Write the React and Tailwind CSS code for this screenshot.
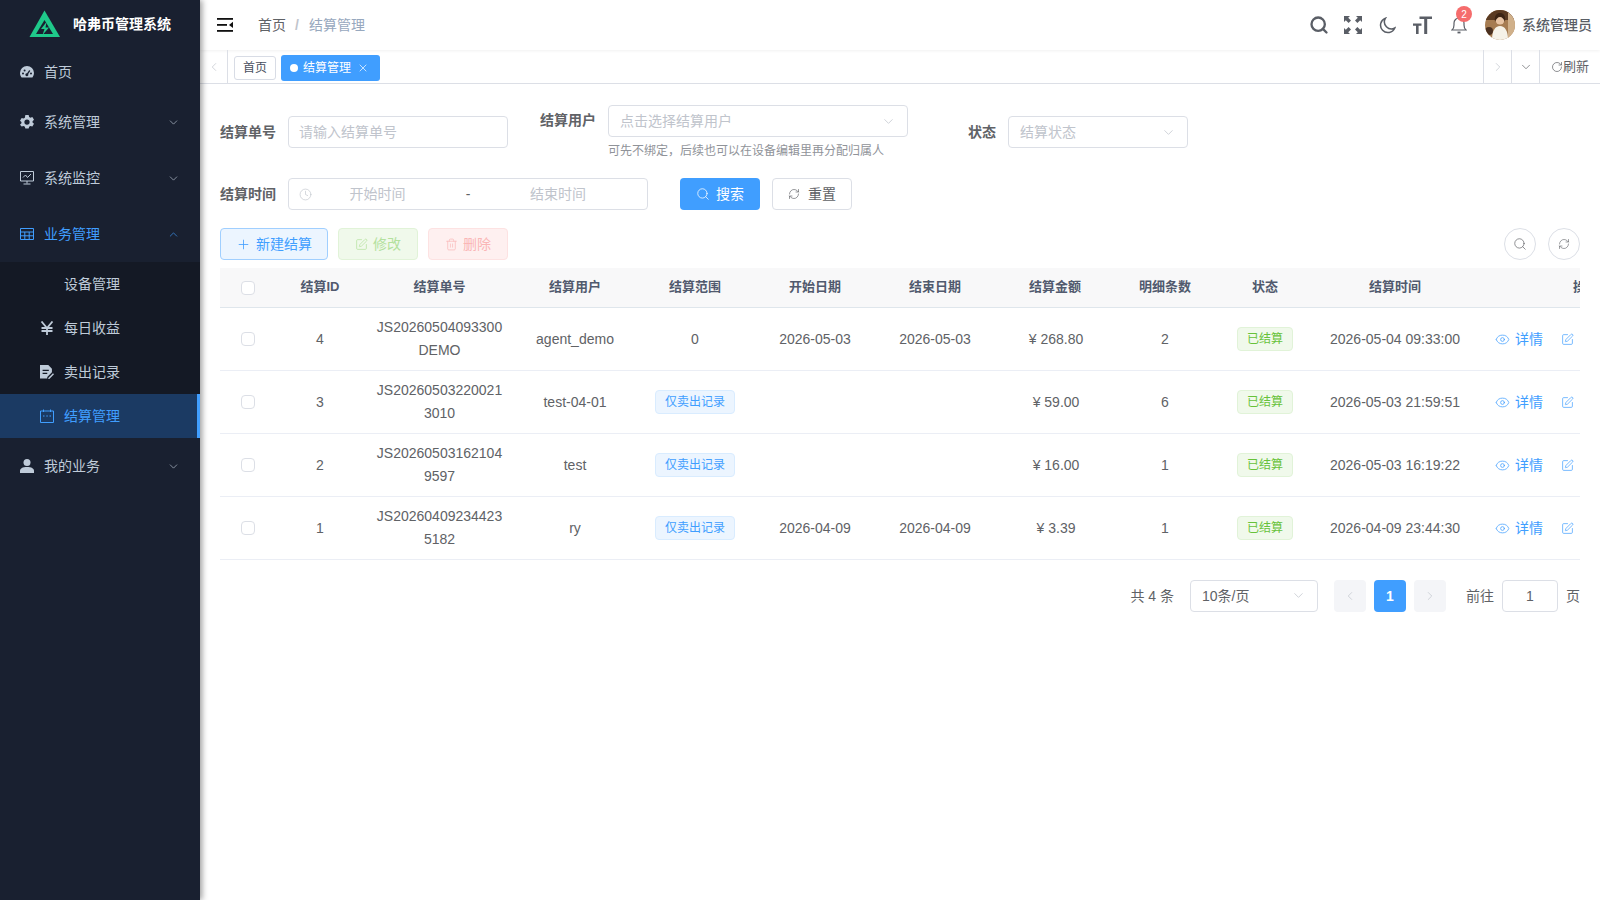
import React from 'react';
import { ChevronDown, ChevronUp, ChevronLeft, ChevronRight, Search, RefreshCw, RotateCw, Plus, X, Clock, Eye, SquarePen, Trash2 } from 'lucide-react';

/** Settlement management page of the admin console. */

const rows = [
  { id: 4, no: 'JS20260504093300DEMO', user: 'agent_demo', range: '0', start: '2026-05-03', end: '2026-05-03', amount: '¥ 268.80', count: 2, time: '2026-05-04 09:33:00' },
  { id: 3, no: 'JS202605032200213010', user: 'test-04-01', range: null, start: '', end: '', amount: '¥ 59.00', count: 6, time: '2026-05-03 21:59:51' },
  { id: 2, no: 'JS202605031621049597', user: 'test', range: null, start: '', end: '', amount: '¥ 16.00', count: 1, time: '2026-05-03 16:19:22' },
  { id: 1, no: 'JS202604092344235182', user: 'ry', range: null, start: '2026-04-09', end: '2026-04-09', amount: '¥ 3.39', count: 1, time: '2026-04-09 23:44:30' },
];

const columns = [
  { title: '结算ID', width: 'w-[88px]' },
  { title: '结算单号', width: 'w-[151px]' },
  { title: '结算用户', width: 'w-[120px]' },
  { title: '结算范围', width: 'w-[120px]' },
  { title: '开始日期', width: 'w-[120px]' },
  { title: '结束日期', width: 'w-[120px]' },
  { title: '结算金额', width: 'w-[120px]' },
  { title: '明细条数', width: 'w-[100px]' },
  { title: '状态', width: 'w-[100px]' },
  { title: '结算时间', width: 'w-[160px]' },
  { title: '操作', width: 'w-[222px]' },
];

function Logo() {
  return (
    <svg width="32" height="28" viewBox="0 0 32 28" className="shrink-0">
      <path d="M15.5 0.5 L31 27 L0.5 27 Z" fill="#1fc98a" />
      <path d="M15.5 10 L24 24 L7 24 Z" fill="#192030" />
      <path d="M17.5 12 L12 19 L15.5 19 L13.5 25 L20 17.5 L16.5 17.5 Z" fill="#1fc98a" />
    </svg>
  );
}

function DashIcon({ className }) {
  return (
    <svg viewBox="1 2 14 12" className={className} fill="currentColor">
      <path fillRule="evenodd" d="M8 2a7 7 0 0 0-7 7c0 1.600.5 3 1.400 4.200.2.2.4.3.6.3h10c.2 0 .4-.1.6-.3A7 7 0 0 0 15 9a7 7 0 0 0-7-7zM4 8.500a1 1 0 1 1 0 2 1 1 0 0 1 0-2zm1.600-3a1 1 0 1 1 0 2 1 1 0 0 1 0-2zm5.800 1.200L9.200 10a1.500 1.500 0 1 1-1.100-.8l2.200-3.200.7.7zM12 8.500a1 1 0 1 1 0 2 1 1 0 0 1 0-2z" />
    </svg>
  );
}

function GearIcon({ className }) {
  return (
    <svg viewBox="0.8 1 14.4 14.4" className={className} fill="currentColor">
      <path fillRule="evenodd" d="M6.300 1h3.400l.5 2 1.300.7 2-.6 1.700 2.900-1.500 1.400v1.200l1.500 1.400-1.700 2.900-2-.6-1.300.7-.5 2H6.300l-.5-2-1.300-.7-2 .6L.8 10.900l1.500-1.400V8.300L.8 6.900 2.500 4l2 .6 1.300-.7zM8 5.500a2.700 2.700 0 1 0 0 5.400 2.700 2.700 0 0 0 0-5.400z" />
    </svg>
  );
}

function MonitorIcon({ className }) {
  return (
    <svg viewBox="1 1.500 14 14" className={className} fill="none" stroke="currentColor" strokeWidth="1">
      <path d="M1.500 2h13v9.500h-13z" />
      <path d="M8 11.500V14M4.500 14.500h7M4 8l2.500-2.500L8.500 8 12 4.500" />
    </svg>
  );
}

function GridIcon({ className }) {
  return (
    <svg viewBox="1 1 14 14" className={className} fill="none" stroke="currentColor" strokeWidth="1">
      <path d="M1.500 2.500h13v11h-13zM1.500 6h13M1.500 9.800h13M5.800 6v7.500M10.200 6v7.500" />
    </svg>
  );
}

function YenIcon({ className }) {
  return (
    <svg viewBox="2 1 12 14" className={className} fill="none" stroke="currentColor" strokeWidth="1.800">
      <path d="M2.500 1.500 8 8l5.500-6.500M2.500 8h11M2.500 11h11M8 8v7" />
    </svg>
  );
}

function DocIcon({ className }) {
  return (
    <svg viewBox="1.500 1.500 13.500 13.500" className={className} fill="currentColor">
      <path fillRule="evenodd" d="M1.500 1.500h8l3.500 3.500v3.500L8.500 13v1.500h-7zM4 6v1.200h6V6zm0 3v1.200h4.500V9z" />
      <path d="M14 9.500 15 10.500 10.500 15H9.500v-1z" />
    </svg>
  );
}

function CalIcon({ className }) {
  return (
    <svg viewBox="1 1 14 14" className={className} fill="none" stroke="currentColor" strokeWidth="1">
      <path d="M1.500 3h13v11.500h-13zM4.500 1.500V4M11.500 1.500V4M4 8h1.500M7.300 8h1.500M10.500 8H12" />
    </svg>
  );
}

function UserIcon({ className }) {
  return (
    <svg viewBox="1 1 14 14" className={className} fill="currentColor">
      <circle cx="8" cy="4.500" r="3.500" />
      <path d="M1 15v-2c0-2.500 2.500-4 7-4s7 1.500 7 4v2z" />
    </svg>
  );
}

function MenuRow({ icon: Icon, label, open, active }) {
  const Arrow = open ? ChevronUp : ChevronDown;
  return (
    <div className={`flex h-14 items-center pl-5 pr-5 text-sm ${active ? 'text-[#409eff]' : 'text-[#bfcbd9]'}`}>
      <Icon className="mr-[10px] h-[14px] w-[14px]" />
      <span>{label}</span>
      <Arrow className="ml-auto h-[13px] w-[13px]" strokeWidth={1.2} />
    </div>
  );
}

function SubRow({ icon: Icon, label, active }) {
  return (
    <div className={`flex h-11 items-center pl-10 text-sm ${active ? 'border-r-[3px] border-[#409eff] bg-[#1b3a63] text-[#409eff]' : 'text-[#bfcbd9]'}`}>
      <span className="mr-[10px] h-[14px] w-[14px]">{Icon && <Icon className="h-[14px] w-[14px]" />}</span>
      <span>{label}</span>
    </div>
  );
}

function Sidebar() {
  return (
    <aside className="relative z-10 flex min-h-[900px] w-[200px] shrink-0 flex-col bg-[#192030] shadow-[2px_0_6px_rgba(0,0,0,0.4)]">
      <div className="flex h-[50px] items-center pb-[2px] pl-[29px]">
        <Logo />
        <span className="ml-3 text-sm font-bold text-white">哈弗币管理系统</span>
      </div>
      <div className="flex h-11 items-center pl-5 text-sm text-[#bfcbd9]">
        <DashIcon className="mr-[10px] h-[12px] w-[14px]" />
        <span>首页</span>
      </div>
      <MenuRow icon={GearIcon} label="系统管理" />
      <MenuRow icon={MonitorIcon} label="系统监控" />
      <MenuRow icon={GridIcon} label="业务管理" open active />
      <div className="bg-[#141925]">
        <SubRow label="设备管理" />
        <SubRow icon={YenIcon} label="每日收益" />
        <SubRow icon={DocIcon} label="卖出记录" />
        <SubRow icon={CalIcon} label="结算管理" active />
      </div>
      <MenuRow icon={UserIcon} label="我的业务" />
    </aside>
  );
}

function Avatar() {
  return (
    <svg width="30" height="30" viewBox="0 0 30 30" className="shrink-0 rounded-full">
      <rect width="30" height="30" fill="#a67c52" />
      <rect x="0" y="0" width="30" height="10" fill="#5a3a22" />
      <rect x="23" y="3" width="7" height="27" fill="#d0b08a" />
      <circle cx="4" cy="21" r="4" fill="#4a3020" />
      <path d="M7 30c0-9 3-14 8-14s8 5 8 14z" fill="#f6f2e8" />
      <circle cx="15" cy="10" r="4.500" fill="#e8c4a4" />
      <path d="M10 12c-1-7 2-9 5-9s6 2 5 9c-1-3-3-5-5-5s-4 2-5 5z" fill="#3c2414" />
    </svg>
  );
}

function Hamburger() {
  return (
    <svg width="16" height="14" viewBox="0 0 16 14" fill="#111">
      <rect x="0" y="0" width="16" height="1.800" />
      <rect x="0" y="6" width="10" height="1.800" />
      <rect x="0" y="12" width="16" height="1.800" />
      <path d="M16 3.800v6.200l-4-3.100z" />
    </svg>
  );
}

function FullscreenIcon() {
  return (
    <svg width="18" height="18" viewBox="0 0 18 18" fill="#5a5e66">
      <path d="M0 0h6L4.200 1.800 7 4.600 4.600 7 1.800 4.200 0 6zM18 0v6l-1.800-1.800L13.400 7 11 4.600l2.800-2.800L12 0zM0 18v-6l1.800 1.800L4.600 11 7 13.400l-2.800 2.800L6 18zM18 18h-6l1.800-1.800L11 13.400l2.400-2.400 2.800 2.800L18 12z" />
    </svg>
  );
}

function MoonIcon() {
  return (
    <svg width="17" height="17" viewBox="0 0 17 17" fill="none" stroke="#5a5e66" strokeWidth="1.500">
      <path d="M6.500 1.200a7.400 7.400 0 1 0 9.300 9.800A7 7 0 0 1 6.500 1.200z" />
    </svg>
  );
}

function FontIcon() {
  return (
    <svg width="19" height="19" viewBox="0 0 19 19" fill="#5a5e66">
      <path d="M6.500 0.500H19v2.600h-4.800V18h-3V3.100H6.500zM0 7.500h8.500v2.200H5.600V18H3V9.700H0z" />
    </svg>
  );
}

function BellIcon() {
  return (
    <svg width="16" height="18" viewBox="0 0 16 18" fill="none" stroke="#5a5e66" strokeWidth="1.200">
      <path d="M1 14c1.500-1.200 2-2.500 2-5V7a5 5 0 0 1 10 0v2c0 2.500.5 3.800 2 5z" />
      <path d="M6.500 16.500h3" strokeWidth="1.800" />
    </svg>
  );
}

function Header() {
  return (
    <header className="flex h-[50px] items-center shadow-[0_1px_3px_rgba(0,0,0,0.06)]">
      <div className="ml-[17px]"><Hamburger /></div>
      <nav className="ml-[25px] flex items-center text-sm">
        <span className="text-[#5f6266]">首页</span>
        <span className="ml-[9px] mr-[10px] font-bold text-[#c0c4cc]">/</span>
        <span className="text-[#97a8be]">结算管理</span>
      </nav>
      <div className="ml-auto flex items-center pr-2">
        <Search className="h-5 w-5 text-[#5a5e66]" strokeWidth={2.800} />
        <div className="ml-[15px]"><FullscreenIcon /></div>
        <div className="ml-[17px]"><MoonIcon /></div>
        <div className="ml-[17px]"><FontIcon /></div>
        <div className="relative ml-[19px]">
          <BellIcon />
          <span className="absolute left-[5px] top-[-10px] flex h-4 w-4 items-center justify-center rounded-full bg-[#f56c6c] text-[10px] text-white">2</span>
        </div>
        <div className="ml-[18px]"><Avatar /></div>
        <span className="ml-[7px] text-sm font-medium text-[#5a5e66]">系统管理员</span>
      </div>
    </header>
  );
}

function TagsBar() {
  return (
    <div className="flex h-[34px] items-center border-b border-[#dcdfe6]">
      <div className="flex h-full w-[28px] items-center justify-center border-r border-[#dcdfe6]">
        <ChevronLeft className="h-[14px] w-[14px] text-[#c0c4cc]" strokeWidth={1.200} />
      </div>
      <span className="ml-[6px] mt-[2px] flex h-6 w-[42px] items-center justify-center rounded-[3px] border border-[#d8dce5] text-xs text-[#495060]">首页</span>
      <span className="ml-[5px] mt-[2px] flex h-[26px] w-[99px] items-center rounded-[3px] bg-[#409eff] pl-[9px] text-xs text-white">
        <span className="mr-[5px] h-2 w-2 rounded-full bg-white" />
        结算管理
        <X className="ml-[6px] h-3 w-3" strokeWidth={1.400} />
      </span>
      <div className="ml-auto flex h-full items-center border-l border-[#dcdfe6]">
        <div className="flex h-full w-[28px] items-center justify-center border-r border-[#dcdfe6]">
          <ChevronRight className="h-[14px] w-[14px] text-[#c0c4cc]" strokeWidth={1.200} />
        </div>
        <div className="flex h-full w-[28px] items-center justify-center border-r border-[#dcdfe6]">
          <ChevronDown className="h-[14px] w-[14px] text-[#606266]" strokeWidth={1.200} />
        </div>
        <div className="flex h-full w-[60px] items-center justify-center text-[13px] text-[#606266]">
          <RotateCw className="h-3 w-3" strokeWidth={1.400} />
          刷新
        </div>
      </div>
    </div>
  );
}

function Label({ children, className = '' }) {
  return <label className={`w-[68px] shrink-0 pr-3 text-right text-sm font-bold text-[#606266] ${className}`}>{children}</label>;
}

function Field({ placeholder, width, arrow }) {
  return (
    <div className={`flex h-8 items-center rounded border border-[#dcdfe6] pr-[11px] text-sm text-[#c0c4cc] ${arrow ? 'pl-[11px]' : 'pl-[10px]'} ${width}`}>
      <span>{placeholder}</span>
      {arrow && <ChevronDown className="ml-auto h-[15px] w-[15px]" strokeWidth={1.200} />}
    </div>
  );
}

function SearchForm() {
  return (
    <>
      <div className="mt-[21px] flex items-center">
        <Label>结算单号</Label>
        <Field placeholder="请输入结算单号" width="w-[220px]" />
        <Label className="ml-8 -translate-y-[12px]">结算用户</Label>
        <div className="w-[300px]">
          <Field placeholder="点击选择结算用户" width="w-[300px]" arrow />
          <p className="mt-1 translate-y-px text-xs leading-[18px] text-[#909399]">可先不绑定，后续也可以在设备编辑里再分配归属人</p>
        </div>
        <Label className="ml-8">状态</Label>
        <Field placeholder="结算状态" width="w-[180px]" arrow />
      </div>
      <div className="mt-[19px] flex items-center">
        <Label>结算时间</Label>
        <div className="flex h-8 w-[360px] items-center rounded border border-[#dcdfe6] pl-[10px] text-sm text-[#c0c4cc]">
          <Clock className="h-[13px] w-[13px]" strokeWidth={1.200} />
          <span className="w-[131px] text-center">开始时间</span>
          <span className="w-[50px] text-center text-[#606266]">-</span>
          <span className="w-[130px] text-center">结束时间</span>
        </div>
        <button className="ml-8 flex h-8 w-20 items-center justify-center rounded bg-[#409eff] text-sm text-white">
          <Search className="mr-[6px] h-[14px] w-[14px]" strokeWidth={1.300} />
          搜索
        </button>
        <button className="ml-3 flex h-8 w-20 items-center justify-center rounded border border-[#dcdfe6] text-sm text-[#606266]">
          <RefreshCw className="mr-[8px] h-3 w-3" strokeWidth={1.300} />
          重置
        </button>
      </div>
    </>
  );
}

function Toolbar() {
  return (
    <div className="mt-[18px] flex items-center">
      <button className="flex h-8 w-[108px] items-center justify-center rounded border border-[#a0cfff] bg-[#ecf5ff] text-sm text-[#409eff]">
        <Plus className="mr-[5px] h-[15px] w-[15px]" strokeWidth={1.300} />
        新建结算
      </button>
      <button className="ml-[10px] flex h-8 w-20 items-center justify-center rounded border border-[#e1f3d8] bg-[#f0f9eb] text-sm text-[#b3e19d]">
        <SquarePen className="mr-[5px] h-[13px] w-[13px]" strokeWidth={1.300} />
        修改
      </button>
      <button className="ml-[10px] flex h-8 w-20 items-center justify-center rounded border border-[#fde2e2] bg-[#fef0f0] text-sm text-[#fab6b6]">
        <Trash2 className="mr-[5px] h-[13px] w-[13px]" strokeWidth={1.300} />
        删除
      </button>
      <button className="ml-auto flex h-8 w-8 items-center justify-center rounded-full border border-[#dcdfe6] text-[#606266]">
        <Search className="h-[14px] w-[14px]" strokeWidth={1.200} />
      </button>
      <button className="ml-3 flex h-8 w-8 items-center justify-center rounded-full border border-[#dcdfe6] text-[#606266]">
        <RefreshCw className="h-3 w-3" strokeWidth={1.200} />
      </button>
    </div>
  );
}

function Checkbox() {
  return <span className="mx-auto block h-[14px] w-[14px] rounded-sm border border-[#dcdfe6] bg-white" />;
}

function Tag({ children, color, width }) {
  const colors = {
    green: 'border-[#e1f3d8] bg-[#f0f9eb] text-[#67c23a]',
    blue: 'border-[#d9ecff] bg-[#ecf5ff] text-[#409eff]',
  };
  return <span className={`inline-flex h-6 items-center justify-center rounded border text-xs ${width} ${colors[color]}`}>{children}</span>;
}

function SettlementTable() {
  return (
    <div className="mt-2 overflow-hidden">
      <table className="w-[1477px] table-fixed border-collapse text-sm text-[#606266]">
        <thead>
          <tr className="h-[39px] border-b border-[#dfe6ec] bg-[#f8f8f9]">
            <th className="w-[56px] pt-px"><Checkbox /></th>
            {columns.map((col) => (
              <th key={col.title} className={`pt-px text-[13px] font-bold text-[#515a6e] ${col.width}`}>{col.title}</th>
            ))}
          </tr>
        </thead>
        <tbody>
          {rows.map((row) => (
            <tr key={row.id} className="h-[63px] border-b border-[#ebeef5] text-center leading-[23px]">
              <td><Checkbox /></td>
              <td className="pt-px">{row.id}</td>
              <td className="break-all px-[10px] pt-px">{row.no}</td>
              <td className="pt-px">{row.user}</td>
              <td className="pt-px">{row.range ?? <Tag color="blue" width="w-[80px]">仅卖出记录</Tag>}</td>
              <td className="pt-px">{row.start}</td>
              <td className="pt-px">{row.end}</td>
              <td className="pl-[2px] pt-px">{row.amount}</td>
              <td className="pt-px">{row.count}</td>
              <td><Tag color="green" width="w-[56px]">已结算</Tag></td>
              <td className="pt-px">{row.time}</td>
              <td className="pl-[20px] text-left text-[#409eff]">
                <div className="flex translate-y-px items-center">
                  <Eye className="mr-[5px] h-[15px] w-[15px]" strokeWidth={1.200} />
                  详情
                  <SquarePen className="ml-[18px] h-[13px] w-[13px]" strokeWidth={1.300} />
                </div>
              </td>
            </tr>
          ))}
        </tbody>
      </table>
    </div>
  );
}

function Pagination() {
  return (
    <div className="mt-5 flex items-center justify-end text-sm text-[#606266]">
      <span>共 4 条</span>
      <div className="ml-4 flex h-8 w-[128px] items-center rounded border border-[#dcdfe6] pl-[11px] pr-[11px]">
        <span>10条/页</span>
        <ChevronDown className="ml-auto h-[15px] w-[15px] text-[#c0c4cc]" strokeWidth={1.200} />
      </div>
      <span className="ml-4 flex h-8 w-8 items-center justify-center rounded-sm bg-[#f4f5f8] text-[#c0c4cc]">
        <ChevronLeft className="h-[14px] w-[14px]" strokeWidth={1.200} />
      </span>
      <span className="ml-2 flex h-8 w-8 items-center justify-center rounded-sm bg-[#409eff] font-bold text-white">1</span>
      <span className="ml-2 flex h-8 w-8 items-center justify-center rounded-sm bg-[#f4f5f8] text-[#c0c4cc]">
        <ChevronRight className="h-[14px] w-[14px]" strokeWidth={1.200} />
      </span>
      <span className="ml-5">前往</span>
      <span className="ml-2 flex h-8 w-14 items-center justify-center rounded border border-[#dcdfe6]">1</span>
      <span className="ml-2">页</span>
    </div>
  );
}

export default function App() {
  return (
    <div className="flex min-h-[900px] bg-white [font-family:'Liberation_Sans','Noto_Sans_CJK_SC',sans-serif]">
      <Sidebar />
      <main className="min-w-0 flex-1">
        <Header />
        <TagsBar />
        <div className="px-5">
          <SearchForm />
          <Toolbar />
          <SettlementTable />
          <Pagination />
        </div>
      </main>
    </div>
  );
}
